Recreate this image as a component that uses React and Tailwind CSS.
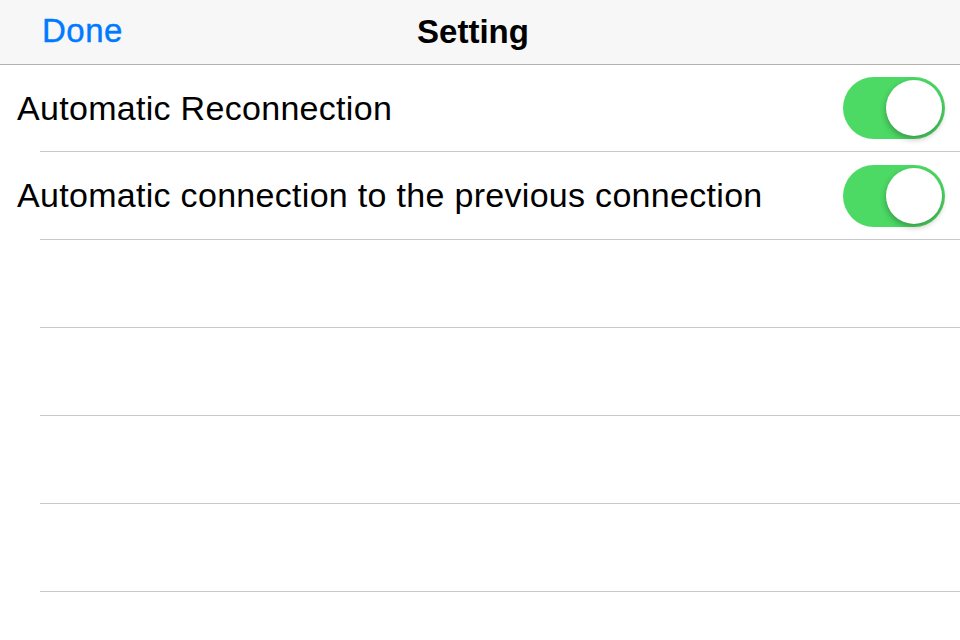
import { useState } from 'react';

const Toggle = ({ on, onChange }) => (
  <button
    type="button"
    onClick={onChange}
    className={`relative w-[102px] h-[62px] rounded-full transition-colors ${on ? 'bg-[#4cd964]' : 'bg-[#e5e5ea]'}`}
  >
    <span
      className={`absolute top-[3px] w-[56px] h-[56px] rounded-full bg-white shadow-[0_3px_6px_rgba(0,0,0,0.3)] transition-all ${on ? 'left-[43px]' : 'left-[3px]'}`}
    />
  </button>
);

const SettingRow = ({ label, on, onToggle, first }) => (
  <div className={`${first ? 'h-[87px]' : 'h-[88px]'} flex flex-col`}>
    <div className="flex-1 flex items-center justify-between pl-[17px] pr-[15px]">
      <span className="text-[34px] tracking-[0.3px] text-black">{label}</span>
      <Toggle on={on} onChange={onToggle} />
    </div>
    <div className="ml-[40px] h-px bg-[#c8c7cc]" />
  </div>
);

const EmptyRow = () => (
  <div className="h-[88px] flex flex-col justify-end">
    <div className="ml-[40px] h-px bg-[#c8c7cc]" />
  </div>
);

export default function App() {
  const [reconnect, setReconnect] = useState(true);
  const [previous, setPrevious] = useState(true);

  return (
    <div className="w-[960px] h-[640px] bg-white overflow-hidden" style={{ fontFamily: '"Liberation Sans", Arial, sans-serif' }}>
      <header className="h-[65px] bg-[#f7f7f7] border-b border-[#b2b2b2] grid grid-cols-[1fr_auto_1fr] items-center">
        <button className="justify-self-start pl-[42px] pb-[2px] text-[33px] tracking-[0.5px] text-[#007aff] [-webkit-text-stroke:0.4px_#007aff]">Done</button>
        <h1 className="text-[33px] font-bold text-black pb-[1px] -ml-[14px]">Setting</h1>
        <div />
      </header>
      <SettingRow first label="Automatic Reconnection" on={reconnect} onToggle={() => setReconnect(!reconnect)} />
      <SettingRow label="Automatic connection to the previous connection" on={previous} onToggle={() => setPrevious(!previous)} />
      <EmptyRow />
      <EmptyRow />
      <EmptyRow />
      <EmptyRow />
    </div>
  );
}
